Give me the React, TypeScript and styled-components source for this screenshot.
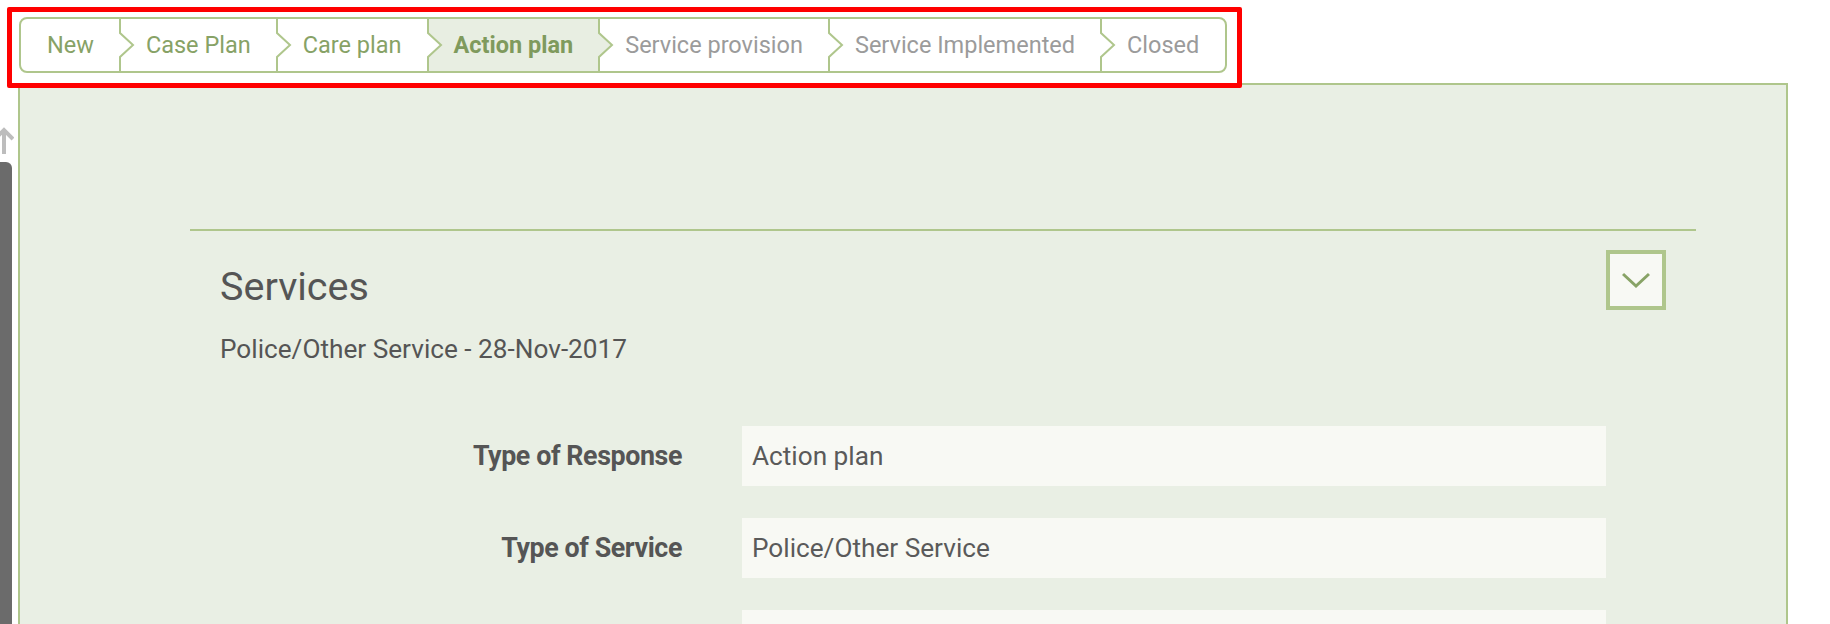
import React from "react";
import styled, { createGlobalStyle } from "styled-components";

const GlobalStyle = createGlobalStyle`
  html, body {
    margin: 0;
    padding: 0;
    overflow: hidden;
    background: #ffffff;
    font-family: Roboto, "Noto Sans", "Liberation Sans", sans-serif;
  }
  * { box-sizing: border-box; }
`;

const LINE = "#afc68c";
const GREEN_TEXT = "#87a266";
const GREY_TEXT = "#9b9b9b";
const ACTIVE_BG = "#e8eee2";

const Page = styled.div`
  position: relative;
  height: 624px;
  padding: 17px 42px 0 18px;
  display: flex;
  flex-direction: column;
  align-items: flex-start;
`;

const Highlight = styled.div`
  position: relative;
  margin-left: 1px;
  &::after {
    content: "";
    position: absolute;
    top: -10px;
    left: -12px;
    right: -15px;
    bottom: -15px;
    border: 5px solid #ff0000;
    border-radius: 2px;
    pointer-events: none;
    z-index: 5;
  }
`;

const Breadcrumb = styled.nav`
  display: flex;
  height: 56px;
  border: 2px solid ${LINE};
  border-radius: 8px;
  background: #ffffff;
  overflow: visible;
`;

const Step = styled.div<{ $state: "done" | "active" | "todo" }>`
  position: relative;
  display: flex;
  align-items: center;
  height: 52px;
  padding: 0 26px;
  font-size: 23.5px;
  font-weight: ${(p) => (p.$state === "active" ? 700 : 400)};
  color: ${(p) =>
    p.$state === "todo" ? GREY_TEXT : p.$state === "active" ? "#7f9a5d" : GREEN_TEXT};
  background: ${(p) => (p.$state === "active" ? ACTIVE_BG : "transparent")};
  white-space: nowrap;
  &:first-child { border-radius: 6px 0 0 6px; }
  &:last-child { border-radius: 0 6px 6px 0; }
`;

const Chevron = styled.svg`
  position: absolute;
  top: 0;
  right: -15px;
  width: 16px;
  height: 52px;
  z-index: 2;
  overflow: visible;
`;

const Panel = styled.section`
  align-self: stretch;
  margin-top: 10px;
  border: 2px solid ${LINE};
  background: #e9efe4;
  padding: 144px 90px 60px 170px;
  flex: 1 0 auto;
`;

const Divider = styled.hr`
  margin: 0;
  border: 0;
  height: 2px;
  background: ${LINE};
`;

const Section = styled.div`
  padding: 0 30px;
`;

const Header = styled.div`
  display: flex;
  align-items: center;
  justify-content: space-between;
  margin-top: 19px;
  height: 60px;
`;

const Title = styled.h2`
  margin: 14px 0 0 0;
  font-size: 39.5px;
  font-weight: 400;
  line-height: 44px;
  color: #555555;
`;

const ToggleButton = styled.button`
  width: 60px;
  height: 60px;
  border: 4px solid ${LINE};
  background: #f8f9f4;
  display: flex;
  align-items: center;
  justify-content: center;
  padding: 0;
  cursor: pointer;
`;

const Subtitle = styled.p`
  margin: 24px 0 0 0;
  font-size: 26.2px;
  line-height: 30px;
  color: #555555;
`;

const Form = styled.div`
  margin-top: 62px;
  display: grid;
  grid-template-columns: 462px 864px;
  column-gap: 60px;
  row-gap: 32px;
  align-items: center;
`;

const Label = styled.label`
  text-align: right;
  font-size: 26.8px;
  font-weight: 700;
  letter-spacing: -0.4px;
  color: #555555;
`;

const Field = styled.div`
  height: 60px;
  background: #f8f9f4;
  display: flex;
  align-items: center;
  padding: 0 10px;
  font-size: 26.2px;
  color: #5a5a5a;
`;

const ScrollRail = styled.div`
  position: absolute;
  left: 0;
  top: 127px;
  bottom: 0;
  width: 14px;
  display: flex;
  flex-direction: column;
  gap: 8px;
`;

const ScrollThumb = styled.div`
  flex: 1;
  width: 12px;
  background: #6b6b6b;
  border-top-right-radius: 6px;
`;

const steps: { label: string; state: "done" | "active" | "todo" }[] = [
  { label: "New", state: "done" },
  { label: "Case Plan", state: "done" },
  { label: "Care plan", state: "done" },
  { label: "Action plan", state: "active" },
  { label: "Service provision", state: "todo" },
  { label: "Service Implemented", state: "todo" },
  { label: "Closed", state: "todo" },
];

const rows = [
  { id: "response", label: "Type of Response", value: "Action plan" },
  { id: "service", label: "Type of Service", value: "Police/Other Service" },
  { id: "provider", label: "", value: "" },
];

export default function App() {
  return (
    <>
      <GlobalStyle />
      <Page>
        <ScrollRail>
          <svg width="14" height="27" viewBox="0 0 14 27">
            <path d="M4 3 V27 M-5 12 L4 3 L13 12" fill="none" stroke="#bdbdbd" strokeWidth="4" />
          </svg>
          <ScrollThumb />
        </ScrollRail>
        <Highlight>
          <Breadcrumb>
            {steps.map((s, i) => (
              <Step key={s.label} $state={s.state}>
                {s.label}
                {i < steps.length - 1 && (
                  <Chevron viewBox="0 0 16 52">
                    <path
                      d="M1 14 L14 26 L1 38 Z"
                      fill={s.state === "active" ? ACTIVE_BG : "#ffffff"}
                    />
                    <path
                      d="M1 0 V14 L14 26 L1 38 V52"
                      fill="none"
                      stroke={LINE}
                      strokeWidth="2"
                    />
                  </Chevron>
                )}
              </Step>
            ))}
          </Breadcrumb>
        </Highlight>
        <Panel>
          <Divider />
          <Section>
            <Header>
              <Title>Services</Title>
              <ToggleButton aria-label="Collapse">
                <svg width="28" height="18" viewBox="0 0 28 18">
                  <path d="M1 3 L14 15 L27 3" fill="none" stroke="#88a366" strokeWidth="3" />
                </svg>
              </ToggleButton>
            </Header>
            <Subtitle>Police/Other Service - 28-Nov-2017</Subtitle>
            <Form>
              {rows.map((r) => (
                <React.Fragment key={r.id}>
                  <Label>{r.label}</Label>
                  <Field>{r.value}</Field>
                </React.Fragment>
              ))}
            </Form>
          </Section>
        </Panel>
      </Page>
    </>
  );
}
